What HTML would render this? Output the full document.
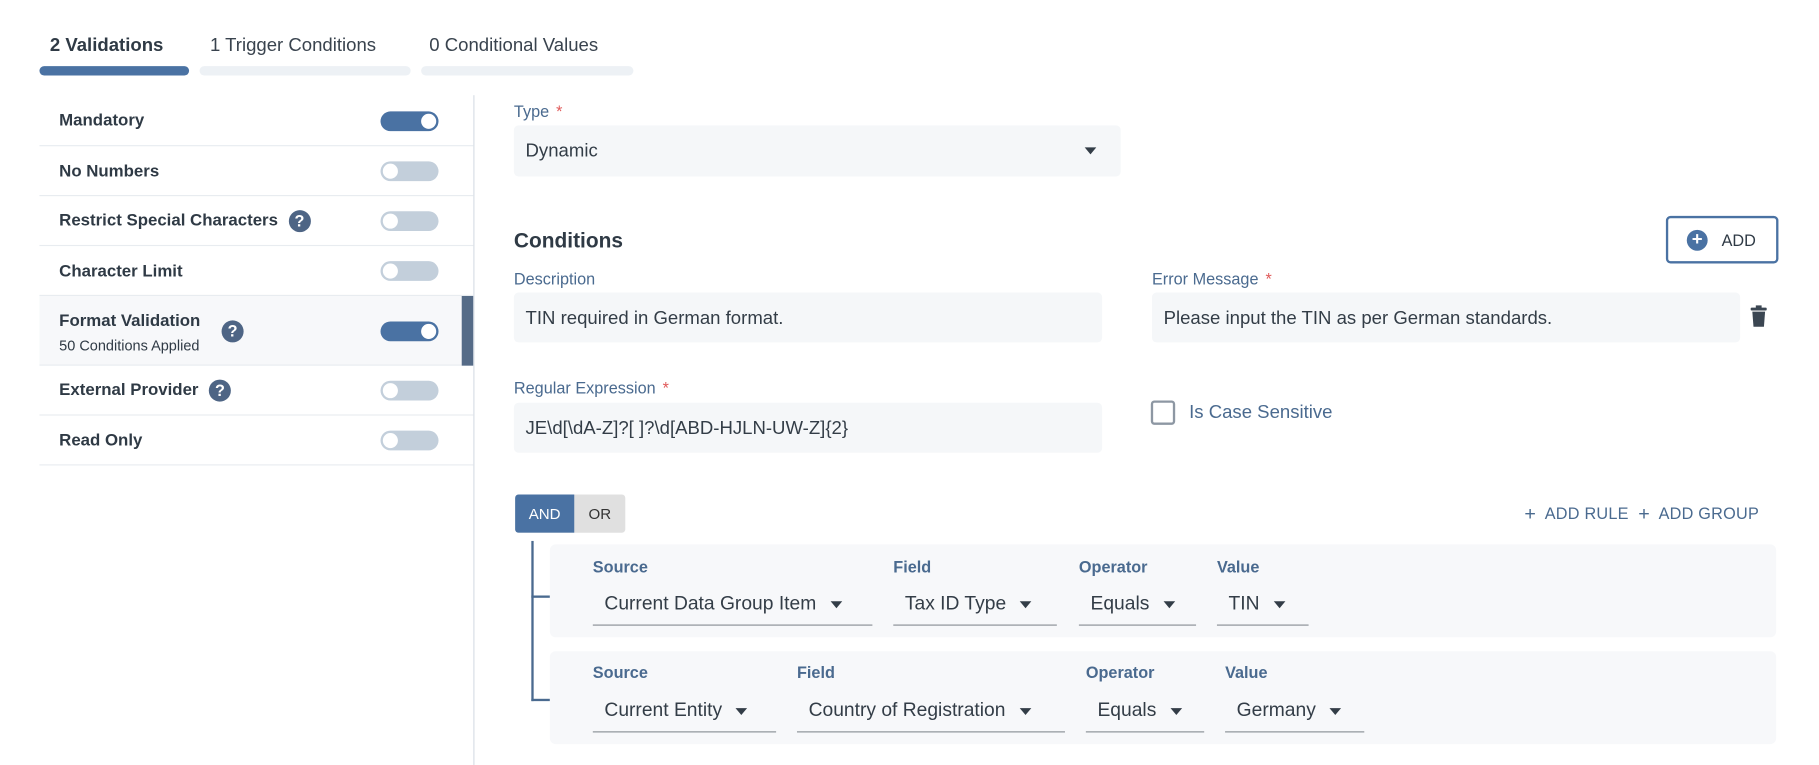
<!DOCTYPE html>
<html><head><meta charset="utf-8"><style>
*{box-sizing:border-box;margin:0;padding:0}
html,body{width:1819px;height:765px;overflow:hidden;background:#fff}
body{font-family:"Liberation Sans",sans-serif;color:#333d47}
#w{position:absolute;left:0;top:0;width:1568px;height:659px;transform:scale(1.1601,1.1608);transform-origin:0 0}
.a{position:absolute;white-space:nowrap}
.tab{font-size:16px;top:31px}
.bar{position:absolute;top:57px;height:8px;border-radius:4px;background:#edf1f5}
.row{position:absolute;left:34px;width:374px;border-bottom:1px solid #e8ecf0}
.row .l{position:absolute;left:17px;font-size:14.5px;font-weight:bold;color:#2f3a45}
.tg{position:absolute;left:294px;width:50px;height:17px;border-radius:9px;background:#c3cfdb}
.tg:after{content:"";position:absolute;top:2px;left:2px;width:13px;height:13px;border-radius:50%;background:#fff}
.tg.on{background:#4a72a3}.tg.on:after{left:35px}
.q{display:inline-block;width:19px;height:19px;border-radius:50%;background:#4e6585;color:#fff;font-size:14px;font-weight:bold;text-align:center;line-height:19px;vertical-align:middle}
.lab{font-size:14px;color:#4a6a8f}
.lab b{color:#e05a5a;font-weight:normal;margin-left:6px}
.in{position:absolute;background:#f5f7f9;border-radius:4px;font-size:16px;color:#333d47;padding-left:10px}
.rb{position:absolute;left:474px;width:1057px;height:80px;background:#f7f8fa;border-radius:5px}
.h{position:absolute;font-size:14px;font-weight:bold;color:#4a6a8f}
.s{position:absolute;font-size:16.6px;color:#333d47;border-bottom:1px solid #8a9096;height:30px;padding-left:10px;line-height:22px}
.car{display:inline-block;width:0;height:0;border-left:5px solid transparent;border-right:5px solid transparent;border-top:6px solid #333d47;vertical-align:middle;margin-left:12px}
</style></head><body><div id="w">
<div class="a tab" style="left:43px;font-weight:bold;color:#2f3a45">2 Validations</div>
<div class="a tab" style="left:181px;color:#39434e">1 Trigger Conditions</div>
<div class="a tab" style="left:370px;color:#39434e">0 Conditional Values</div>
<div class="bar" style="left:34px;width:129px;background:#4a72a3"></div>
<div class="bar" style="left:172px;width:182px"></div>
<div class="bar" style="left:363px;width:183px"></div>

<div class="row" style="top:82px;height:44px"><span class="l" style="top:14px">Mandatory</span><div class="tg on" style="top:14px"></div></div>
<div class="row" style="top:126px;height:43px"><span class="l" style="top:14px">No Numbers</span><div class="tg" style="top:13px"></div></div>
<div class="row" style="top:169px;height:43px"><span class="l" style="top:12px">Restrict Special Characters <span class="q" style="margin-left:5px">?</span></span><div class="tg" style="top:13px"></div></div>
<div class="row" style="top:212px;height:43px"><span class="l" style="top:14px">Character Limit</span><div class="tg" style="top:13px"></div></div>
<div class="row" style="top:255px;height:60px;background:#f7f8fa"><span class="l" style="top:14px">Format Validation</span><span class="a" style="left:17px;top:36px;font-size:12.5px;color:#2f3a45">50 Conditions Applied</span><span class="q a" style="left:157px;top:21px">?</span><div class="tg on" style="top:22px"></div><div style="position:absolute;left:364px;top:0;width:10px;height:60px;background:#556b87"></div></div>
<div class="row" style="top:315px;height:43px"><span class="l" style="top:12px">External Provider <span class="q" style="margin-left:5px">?</span></span><div class="tg" style="top:13px"></div></div>
<div class="row" style="top:358px;height:43px"><span class="l" style="top:14px">Read Only</span><div class="tg" style="top:13px"></div></div>
<div style="position:absolute;left:408px;top:82px;width:1px;height:577px;background:#d8dee6"></div>

<div class="a lab" style="left:443px;top:88px">Type<b>*</b></div>
<div class="in" style="left:443px;top:108px;width:523px;height:44px;line-height:46px">Dynamic<span style="position:absolute;left:492px;top:19px;border-left:5px solid transparent;border-right:5px solid transparent;border-top:6px solid #333d47"></span></div>

<div class="a" style="left:443px;top:197px;font-size:18px;font-weight:bold;color:#2f3a45">Conditions</div>
<div class="a" style="left:1436px;top:186px;width:97px;height:41px;border:2px solid #4a72a3;border-radius:4px;font-size:14px;color:#2f3a45;line-height:38px;padding-left:46px">ADD<span style="position:absolute;left:16px;top:10px;width:18px;height:18px;border-radius:50%;background:#4a72a3;color:#fff;font-weight:bold;text-align:center;line-height:18px;font-size:16px">+</span></div>

<div class="a lab" style="left:443px;top:232px">Description</div>
<div class="in" style="left:443px;top:252px;width:507px;height:43px;line-height:45px">TIN required in German format.</div>
<div class="a lab" style="left:993px;top:232px">Error Message<b>*</b></div>
<div class="in" style="left:993px;top:252px;width:507px;height:43px;line-height:45px">Please input the TIN as per German standards.</div>
<svg class="a" style="left:1509px;top:263px" width="14" height="19" viewBox="0 0 14 19"><rect x="0" y="2" width="14" height="2.5" rx="1" fill="#3b4652"/><rect x="4.5" y="0" width="5" height="3" fill="#3b4652"/><path d="M1.5 5.5h11l-1 13h-9z" fill="#3b4652"/></svg>

<div class="a lab" style="left:443px;top:326px">Regular Expression<b>*</b></div>
<div class="in" style="left:443px;top:347px;width:507px;height:43px;line-height:45px">JE\d[\dA-Z]?[ ]?\d[ABD-HJLN-UW-Z]{2}</div>
<div class="a" style="left:992px;top:345px;width:21px;height:21px;border:2px solid #8d97a3;border-radius:3px"></div>
<div class="a" style="left:1025px;top:347px;font-size:16px;color:#4a6a8f">Is Case Sensitive</div>

<div class="a" style="left:444px;top:426px;width:95px;height:33px;border-radius:3px;background:#e0e0e0;overflow:hidden"><div style="position:absolute;left:0;top:0;width:51px;height:33px;background:#4a72a3;color:#fff;font-size:13px;text-align:center;line-height:33px">AND</div><div style="position:absolute;left:51px;width:44px;top:0;font-size:13px;text-align:center;line-height:33px;color:#333">OR</div></div>
<div class="a" style="left:1314px;top:433px;font-size:14px;color:#4a6a8f;letter-spacing:0.2px"><span style="font-size:17px;vertical-align:-1px">+</span>&nbsp; ADD RULE &nbsp;<span style="font-size:17px;vertical-align:-1px">+</span>&nbsp; ADD GROUP</div>

<div class="a" style="left:458px;top:466px;width:2px;height:138px;background:#4a6a8f"></div>
<div class="a" style="left:458px;top:513px;width:16px;height:2px;background:#4a6a8f"></div>
<div class="a" style="left:458px;top:602px;width:16px;height:2px;background:#4a6a8f"></div>

<div class="rb" style="top:469px"></div>
<div class="h" style="left:511px;top:480px">Source</div><div class="h" style="left:770px;top:480px">Field</div><div class="h" style="left:930px;top:480px">Operator</div><div class="h" style="left:1049px;top:480px">Value</div>
<div class="s" style="left:511px;top:509px;width:241px">Current Data Group Item<span class="car"></span></div>
<div class="s" style="left:770px;top:509px;width:141px">Tax ID Type<span class="car"></span></div>
<div class="s" style="left:930px;top:509px;width:101px">Equals<span class="car"></span></div>
<div class="s" style="left:1049px;top:509px;width:79px">TIN<span class="car"></span></div>

<div class="rb" style="top:561px"></div>
<div class="h" style="left:511px;top:571px">Source</div><div class="h" style="left:687px;top:571px">Field</div><div class="h" style="left:936px;top:571px">Operator</div><div class="h" style="left:1056px;top:571px">Value</div>
<div class="s" style="left:511px;top:601px;width:158px">Current Entity<span class="car"></span></div>
<div class="s" style="left:687px;top:601px;width:231px">Country of Registration<span class="car"></span></div>
<div class="s" style="left:936px;top:601px;width:102px">Equals<span class="car"></span></div>
<div class="s" style="left:1056px;top:601px;width:120px">Germany<span class="car"></span></div>
</div></body></html>
